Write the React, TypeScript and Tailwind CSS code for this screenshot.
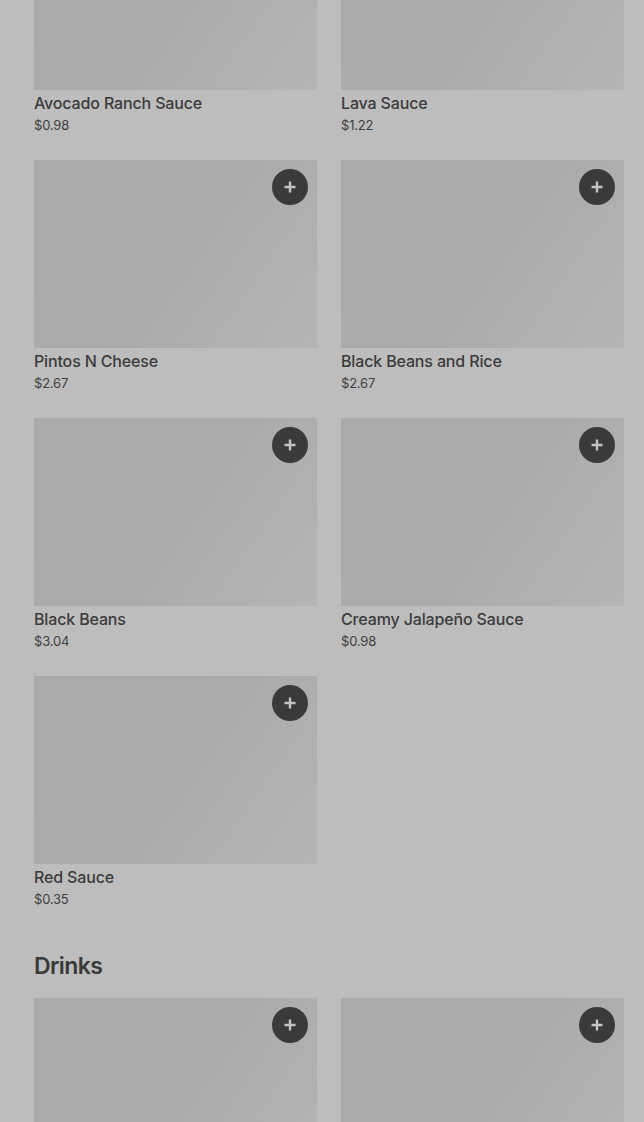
import React from "react";

type Item = { name?: string; price?: string; plus?: boolean };

const sauces: Item[] = [
  { name: "Avocado Ranch Sauce", price: "$0.98" },
  { name: "Lava Sauce", price: "$1.22" },
  { name: "Pintos N Cheese", price: "$2.67", plus: true },
  { name: "Black Beans and Rice", price: "$2.67", plus: true },
  { name: "Black Beans", price: "$3.04", plus: true },
  { name: "Creamy Jalapeño Sauce", price: "$0.98", plus: true },
  { name: "Red Sauce", price: "$0.35", plus: true },
];

const drinks: Item[] = [{ plus: true }, { plus: true }];

function PlusButton() {
  return (
    <div className="absolute right-[9px] top-[9px] flex h-9 w-9 items-center justify-center rounded-full bg-[#3a3a3a]">
      <svg width="14" height="14" viewBox="0 0 14 14">
        <path d="M7 1.5v11M1.5 7h11" stroke="#c4c4c4" strokeWidth="2.4" />
      </svg>
    </div>
  );
}

function Card({ item }: { item: Item }) {
  return (
    <div className="flex flex-col">
      <div className="relative h-[188px] w-full bg-[linear-gradient(125deg,#aaaaaa_0%,#ababab_55%,#b5b5b5_100%)]">
        {item.plus && <PlusButton />}
      </div>
      {item.name && (
        <div className="pt-[3px] text-[16px] font-medium leading-[20px] tracking-[-0.15px] text-[#3b3b3b]">
          {item.name}
        </div>
      )}
      {item.price && (
        <div className="mt-[2px] text-[13px] leading-[20px] tracking-[-0.2px] text-[#3f3f3f]">{item.price}</div>
      )}
    </div>
  );
}

export default function App() {
  return (
    <div
      className="h-[1122px] overflow-hidden bg-[#bdbdbd] pl-[34px] pr-[20px]"
      style={{ fontFamily: "Inter, 'Noto Sans', sans-serif" }}
    >
      <div className="mt-[-98px] grid grid-cols-2 gap-x-[24px] gap-y-[25px]">
        {sauces.map((s, i) => (
          <Card key={i} item={s} />
        ))}
      </div>
      <h2 className="mt-[42px] text-[23px] font-semibold leading-[30px] tracking-[-0.6px] text-[#393939]">Drinks</h2>
      <div className="mt-[17px] grid grid-cols-2 gap-x-[24px] gap-y-[25px]">
        {drinks.map((s, i) => (
          <Card key={i} item={s} />
        ))}
      </div>
    </div>
  );
}
